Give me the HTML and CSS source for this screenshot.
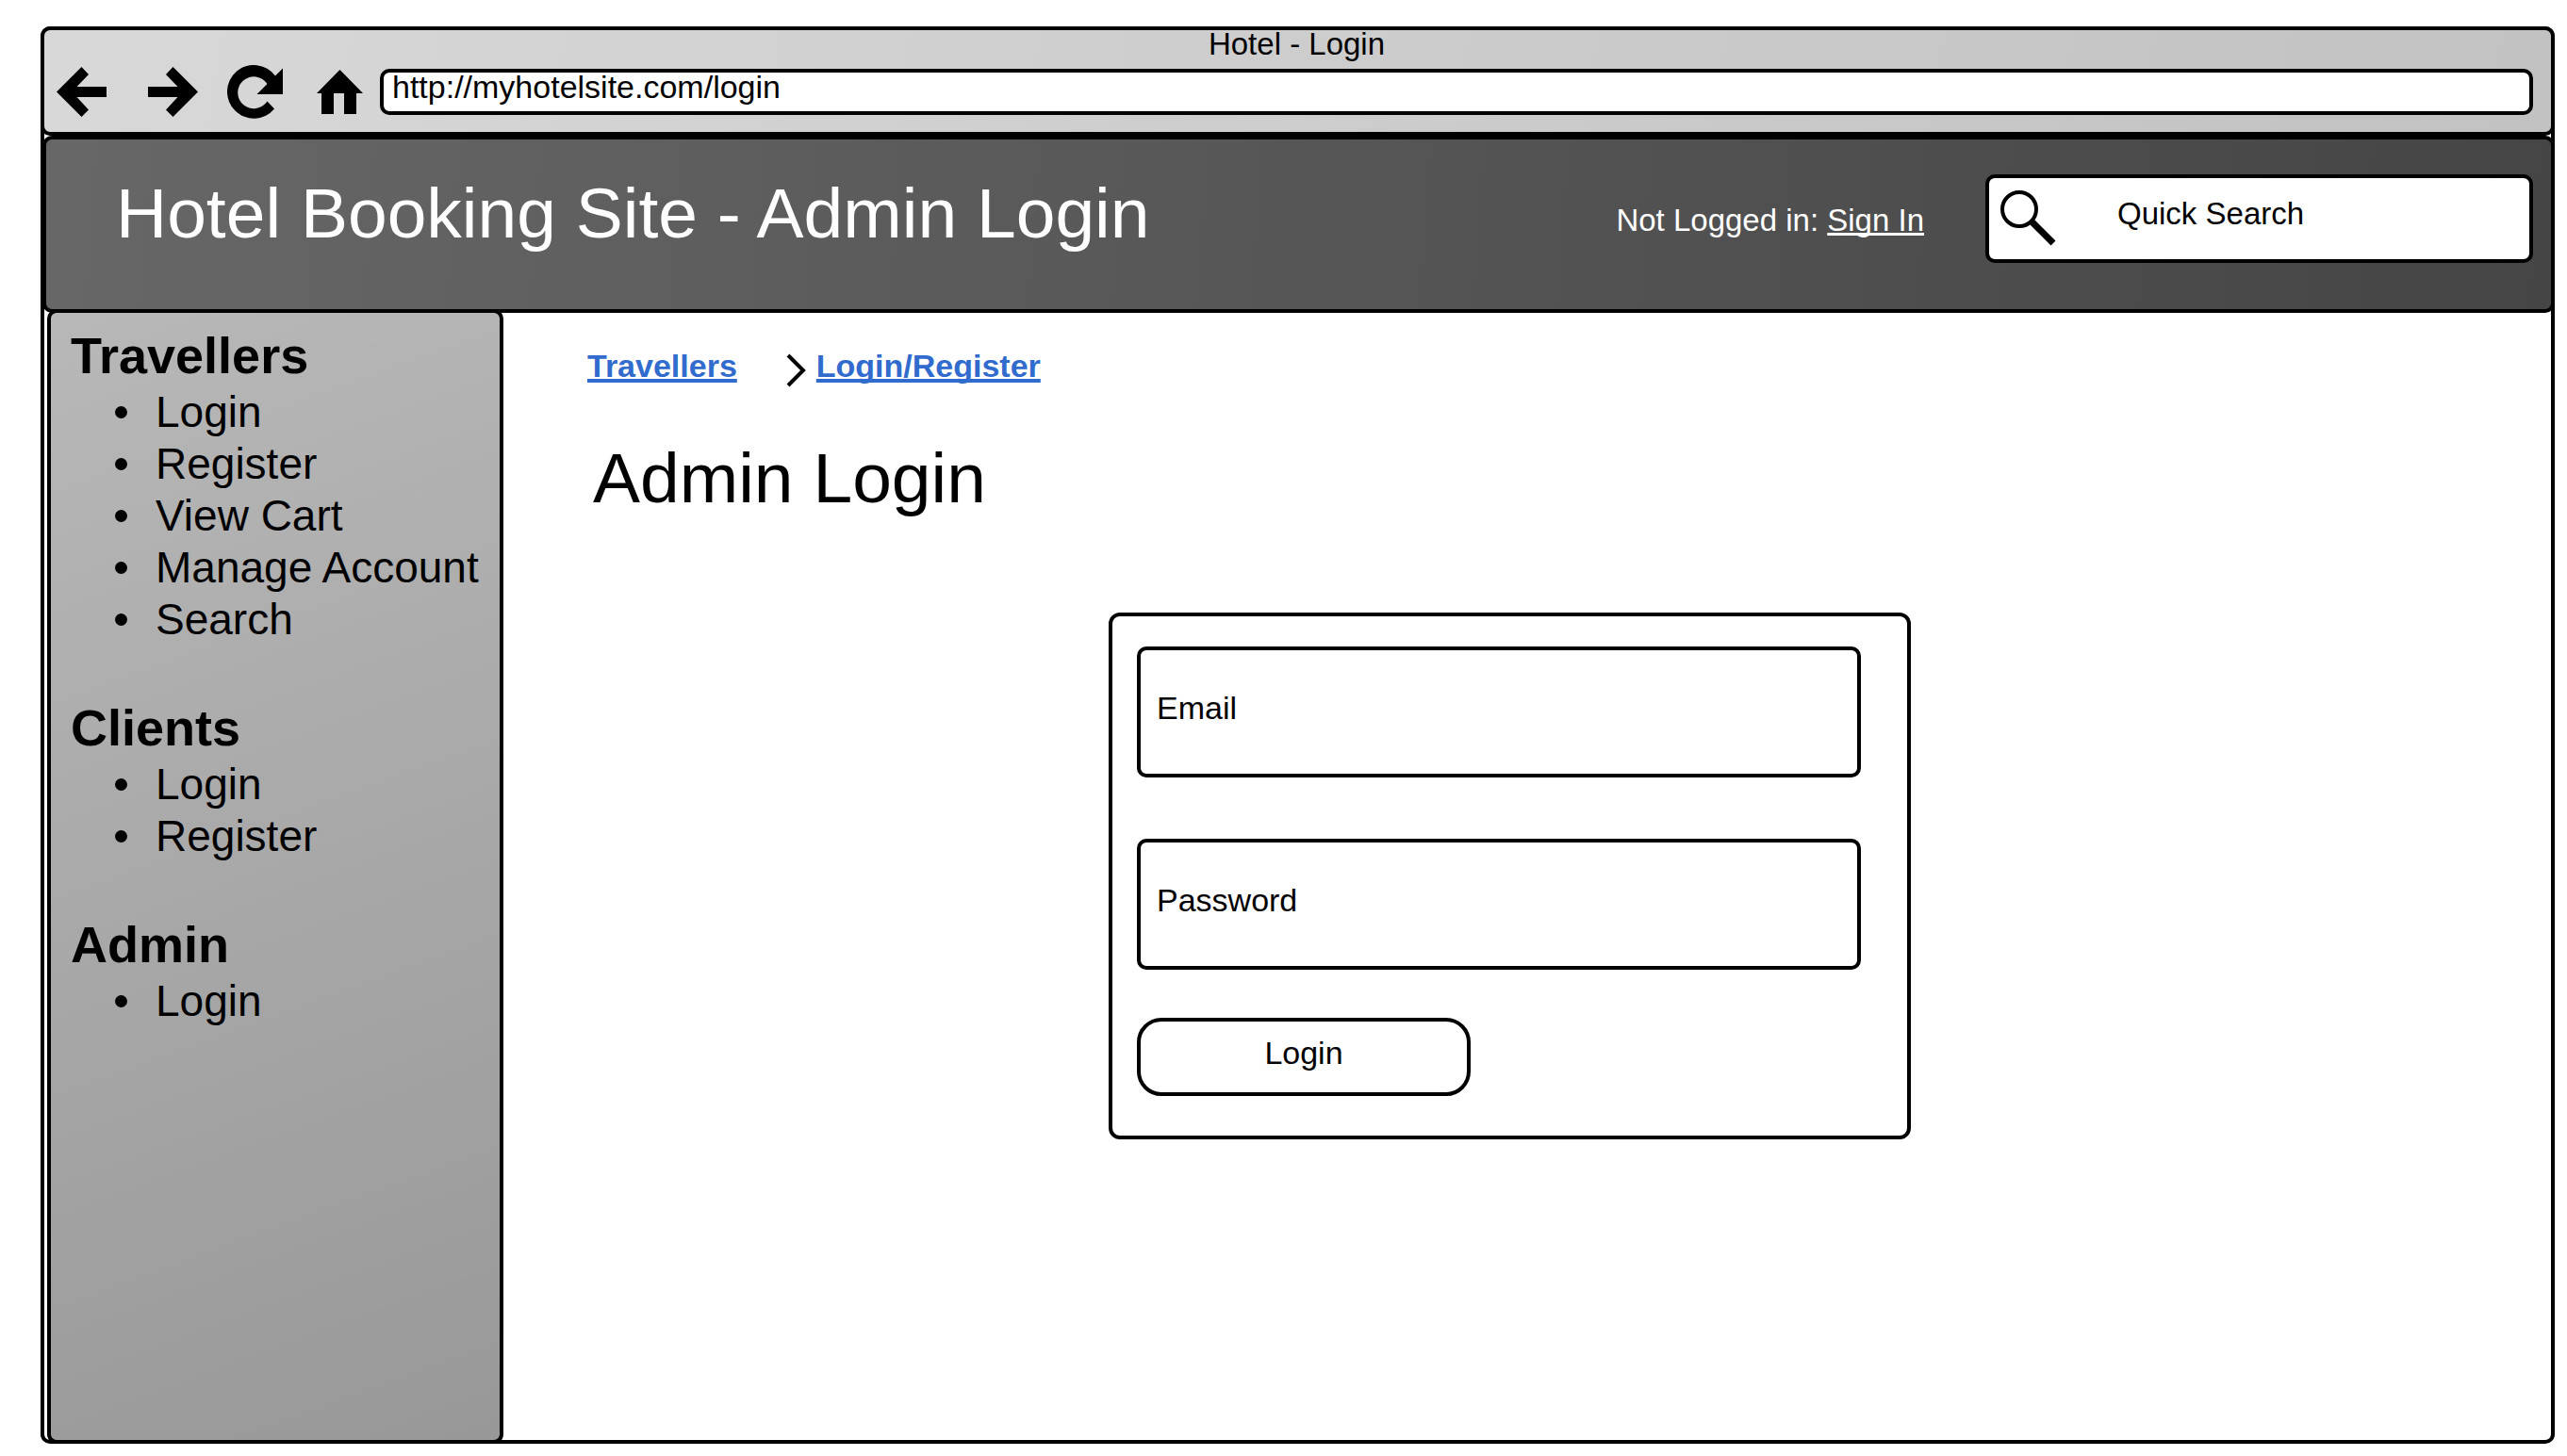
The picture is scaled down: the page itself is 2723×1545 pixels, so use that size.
FILE: index.html
```html
<!DOCTYPE html>
<html lang="en">
<head>
<meta charset="utf-8">
<title>Hotel - Login</title>
<meta name="viewport" content="width=device-width, initial-scale=1">
<link rel="stylesheet" href="styles.css">
</head>
<body>
<div class="window">
  <div class="chrome">
    <div class="window-title">Hotel - Login</div>
    <div class="toolbar">
      <button class="tool back" type="button" aria-label="Back"><svg width="54" height="54" viewBox="0 0 54 54"><path d="M0 26.5 26.5 0 34 8 21.5 21H53V32H21.5L34 45.5 26.5 53Z"/></svg></button>
      <button class="tool forward" type="button" aria-label="Forward"><svg width="54" height="54" viewBox="0 0 54 54"><path d="M53 26.5 26.5 0 19 8 31.5 21H0V32H31.5L19 45.5 26.5 53Z"/></svg></button>
      <button class="tool reload" type="button" aria-label="Reload"><svg width="60" height="58" viewBox="0 0 60 58"><path d="M59 3.5V31H31.500L42.500 20A17 17 0 1 0 42.500 38.500L50 46.500A28.300 28.300 0 1 1 51 11.500Z"/></svg></button>
      <button class="tool home" type="button" aria-label="Home"><svg width="49" height="48" viewBox="0 0 49 48"><path d="M24.500 0 49 25H42V47H29V25H18V47H5V25H0Z"/></svg></button>
      <input class="address" type="text" aria-label="Address" value="http://myhotelsite.com/login">
    </div>
  </div>
  <header class="site-header">
    <h1 class="site-title">Hotel Booking Site - Admin Login</h1>
    <p class="session">Not Logged in: <a href="#signin">Sign In</a></p>
    <label class="search">
      <svg class="search-icon" width="60" height="60" viewBox="0 0 60 60"><circle cx="20" cy="20" r="18" fill="none" stroke="#000" stroke-width="4"/><path d="M32 32 56 56" stroke="#000" stroke-width="7"/></svg>
      <input class="search-input" type="search" aria-label="Quick Search" placeholder="Quick Search">
    </label>
  </header>
  <div class="body">
    <nav class="sidebar" aria-label="Site">
      <h2>Travellers</h2>
      <ul>
        <li><a href="#login">Login</a></li>
        <li><a href="#register">Register</a></li>
        <li><a href="#cart">View Cart</a></li>
        <li><a href="#account">Manage Account</a></li>
        <li><a href="#search">Search</a></li>
      </ul>
      <h2>Clients</h2>
      <ul>
        <li><a href="#client-login">Login</a></li>
        <li><a href="#client-register">Register</a></li>
      </ul>
      <h2>Admin</h2>
      <ul>
        <li><a href="#admin-login">Login</a></li>
      </ul>
    </nav>
    <main class="content">
      <nav class="breadcrumb" aria-label="Breadcrumb">
        <a href="#travellers">Travellers</a>
        <svg width="22" height="36" viewBox="0 0 22 36"><path d="M2 2 18 18 2 34" fill="none" stroke="#000" stroke-width="4"/></svg>
        <a href="#login-register">Login/Register</a>
      </nav>
      <h2 class="page-title">Admin Login</h2>
      <form class="login">
        <div class="fields">
          <input class="field" type="email" aria-label="Email" placeholder="Email">
          <input class="field" type="password" aria-label="Password" placeholder="Password">
        </div>
        <button class="submit" type="button">Login</button>
      </form>
    </main>
  </div>
</div>
</body>
</html>
```
FILE: styles.css
```css
* {
  box-sizing: border-box;
}

body {
  margin: 0;
  min-height: 100vh;
  padding: 28px 13px 13px 43px;
  display: flex;
  background: #fff;
  color: #000;
  font-family: "Liberation Sans", Arial, sans-serif;
  font-size: 34px;
}

h1, h2, p, ul {
  margin: 0;
  padding: 0;
}

h1, .page-title {
  font-size: 75px;
  font-weight: 400;
  line-height: 86px;
}

input, button {
  font: inherit;
  color: inherit;
}

input::placeholder {
  color: #000;
  opacity: 1;
}

a {
  color: inherit;
}

/* Browser window */

.window {
  flex: 1;
  display: flex;
  flex-direction: column;
  border: 4px solid #000;
  border-radius: 10px;
}

.chrome {
  margin: -4px -4px 0;
  border: 4px solid #000;
  border-radius: 10px;
  padding-bottom: 7px;
  background: linear-gradient(100deg, #d8d8d8, #c2c2c2);
}

.window-title {
  padding-right: 2px;
  font-size: 33px;
  line-height: 30px;
  text-align: center;
}

.toolbar {
  display: flex;
  align-items: center;
  height: 71px;
  padding: 0 19px 0 13px;
}

.tool {
  flex: none;
  display: block;
  padding: 0;
  border: 0;
  background: none;
}

.tool svg {
  display: block;
}

.forward {
  margin-left: 43px;
}

.reload {
  margin-left: 30px;
}

.home {
  margin-left: 35px;
}

.address {
  flex: 1;
  min-width: 0;
  height: 49px;
  margin-left: 18px;
  padding: 0 9px 10px;
  border: 4px solid #000;
  border-radius: 10px;
  background: #fff;
}

/* Site header */

.site-header {
  display: flex;
  align-items: center;
  height: 188px;
  margin: 0 -4px 0 -2px;
  padding: 0 19px 12px 74px;
  border: 4px solid #000;
  border-radius: 10px;
  background: linear-gradient(94deg, #676767, #454545);
  color: #fff;
}

.site-title {
  padding-bottom: 12px;
}

.session {
  margin-left: auto;
  padding-top: 3px;
  font-size: 33px;
}

.session a,
.breadcrumb a {
  text-decoration-skip-ink: none;
}

.search {
  display: flex;
  align-items: center;
  width: 581px;
  height: 94px;
  margin-left: 65px;
  padding-left: 12px;
  border: 4px solid #000;
  border-radius: 10px;
  background: #fff;
  color: #000;
  font-size: 33px;
}

.search-icon {
  flex: none;
}

.search-input {
  flex: 1;
  min-width: 0;
  padding: 0 0 10px 64px;
  border: 0;
  background: none;
}

/* Sidebar */

.body {
  flex: 1;
  display: flex;
  margin: -4px 0 -4px 3px;
}

.sidebar {
  flex: none;
  width: 484px;
  padding: 12px 10px 40px 21px;
  border: 4px solid #000;
  border-radius: 10px;
  background: linear-gradient(160deg, #b8b8b8, #989898);
}

.sidebar h2 {
  font-size: 54px;
  line-height: 66px;
}

.sidebar ul {
  margin-bottom: 54px;
  padding-left: 47px;
  font-size: 46px;
  line-height: 55px;
  list-style: none;
}

.sidebar li {
  display: flex;
  align-items: center;
  gap: 30px;
  white-space: nowrap;
}

.sidebar li::before {
  content: "";
  width: 13px;
  height: 13px;
  border-radius: 50%;
  background: #000;
}

.sidebar a {
  text-decoration: none;
}

/* Page content */

.content {
  flex: 1;
  padding: 37px 0 40px 89px;
}

.breadcrumb {
  display: flex;
  align-items: center;
  font-weight: 700;
  color: #316bcd;
}

.breadcrumb a {
  text-decoration-thickness: 4px;
}

.breadcrumb svg {
  margin: 10px 10px 0 52px;
}

.page-title {
  margin-top: 53px;
  padding-left: 6px;
}

.login {
  display: flex;
  flex-direction: column;
  align-items: flex-start;
  gap: 51px;
  width: 851px;
  margin: 100px 0 0 553px;
  padding: 32px 26px 42px;
  border: 4px solid #000;
  border-radius: 12px;
}

.fields {
  display: flex;
  flex-direction: column;
  gap: 65px;
  width: 768px;
}

.field {
  height: 139px;
  padding: 0 17px 8px;
  border: 4px solid #000;
  border-radius: 10px;
  background: #fff;
}

.submit {
  width: 354px;
  height: 83px;
  padding: 0 0 8px;
  border: 4px solid #000;
  border-radius: 26px;
  background: #fff;
}
```
